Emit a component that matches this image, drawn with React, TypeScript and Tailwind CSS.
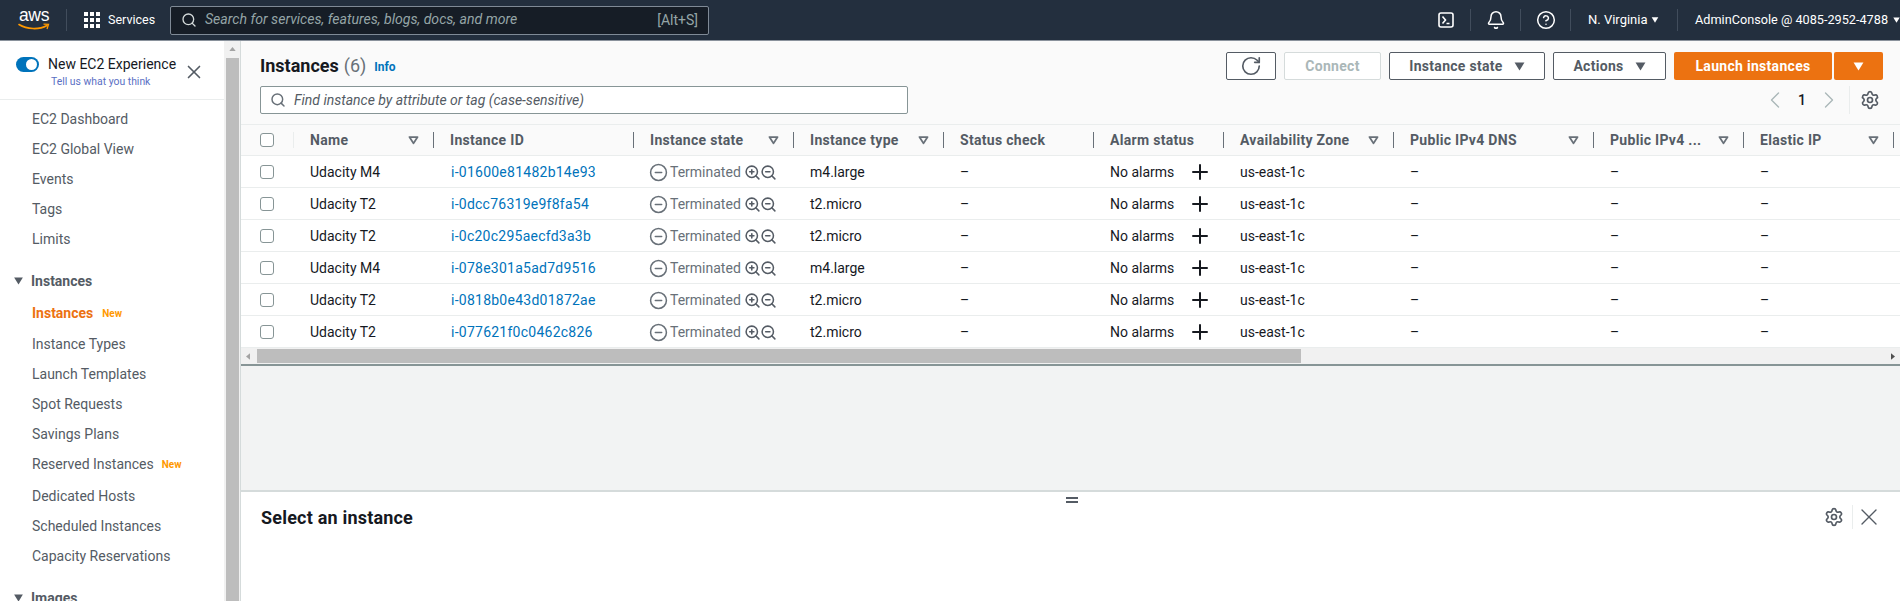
import { Bell, ChevronLeft, ChevronRight, CircleHelp, CircleMinus, Plus, RotateCw, Search, Settings, X, ZoomIn, ZoomOut } from "lucide-react";

const gridCols =
  "grid grid-cols-[53px_140px_200px_160px_150px_150px_130px_170px_200px_150px_150px_minmax(0,1fr)]";

type Row = { name: string; id: string; type: string };

const rows: Row[] = [
  { name: "Udacity M4", id: "i-01600e81482b14e93", type: "m4.large" },
  { name: "Udacity T2", id: "i-0dcc76319e9f8fa54", type: "t2.micro" },
  { name: "Udacity T2", id: "i-0c20c295aecfd3a3b", type: "t2.micro" },
  { name: "Udacity M4", id: "i-078e301a5ad7d9516", type: "m4.large" },
  { name: "Udacity T2", id: "i-0818b0e43d01872ae", type: "t2.micro" },
  { name: "Udacity T2", id: "i-077621f0c0462c826", type: "t2.micro" },
];

const columns = [
  { label: "Name", filter: true },
  { label: "Instance ID", filter: false },
  { label: "Instance state", filter: true },
  { label: "Instance type", filter: true },
  { label: "Status check", filter: false },
  { label: "Alarm status", filter: false },
  { label: "Availability Zone", filter: true },
  { label: "Public IPv4 DNS", filter: true },
  { label: "Public IPv4 ...", filter: true },
  { label: "Elastic IP", filter: true },
];

const navTop = ["EC2 Dashboard", "EC2 Global View", "Events", "Tags", "Limits"];

function Caret({ className }: { className: string }) {
  return (
    <svg viewBox="0 0 12 10" className={className} fill="currentColor">
      <path d="M0.5 0.5h11L6 9.5z" />
    </svg>
  );
}

function FilterIcon() {
  return (
    <svg viewBox="0 0 12 10" className="h-[9px] w-[11px] text-[#687078]" fill="none" stroke="currentColor" strokeWidth="2">
      <path d="M1.5 1.2h9L6 8.2z" strokeLinejoin="round" />
    </svg>
  );
}

function Checkbox() {
  return <span className="block h-[14px] w-[14px] rounded-[3px] border border-[#879596] bg-white" />;
}

function NavItem({ label, isNew }: { label: string; isNew?: boolean }) {
  return (
    <div className="flex h-[30px] items-center pl-[32px] text-[#545b64]">
      <span>{label}</span>
      {isNew ? <span className="ml-[8px] text-[10px] font-bold text-[#ff9900]">New</span> : null}
    </div>
  );
}

function TopDivider() {
  return <span className="block h-[22px] w-px bg-[#414d5c]" />;
}

export default function App() {
  return (
    <div className="flex h-[601px] w-full flex-col overflow-hidden bg-white font-['Roboto','Liberation_Sans',sans-serif] text-[14px] text-[#16191f]">
      <header className="flex h-[41px] shrink-0 items-center border-b border-[#8a929c] bg-[#232f3e] text-white">
        <div className="relative ml-[18px] h-[30px] w-[32px]">
          <span className="block text-center font-['Liberation_Sans',sans-serif] text-[17.5px] leading-[20px] tracking-[-0.3px]">aws</span>
          <svg viewBox="0 0 32 8" className="absolute bottom-[4px] left-0 h-[8px] w-[32px]" fill="none">
            <path d="M1 1.5C9 6.5 21 7 29 2.5" stroke="#ff9900" strokeWidth="1.6" strokeLinecap="round" />
            <path d="M25.5 1.2L30.5 1.4L29 6" stroke="#ff9900" strokeWidth="1.3" />
          </svg>
        </div>
        <span className="ml-[16px] h-[22px] w-px bg-[#414d5c]" />
        <div className="ml-[17px] grid grid-cols-3 gap-[2px]">
          {Array.from({ length: 9 }).map((_, i) => (
            <span key={i} className="h-[4px] w-[4px] bg-white" />
          ))}
        </div>
        <span className="ml-[8px] w-[62px] text-[12.5px]">Services</span>
        <div className="flex h-[29px] w-[539px] items-center rounded-[2px] border border-[#7f8a96] bg-[#161d26] pl-[10px] pr-[10px]">
          <Search className="h-[16px] w-[16px] text-[#d5dbdb]" strokeWidth={2} />
          <span className="ml-[8px] flex-1 text-[14.1px] italic text-[#95a5a6]">
            Search for services, features, blogs, docs, and more
          </span>
          <span className="text-[14px] text-[#95a5a6]">[Alt+S]</span>
        </div>
        <div className="ml-auto flex items-center text-[13px]">
          <svg viewBox="0 0 16 16" className="h-[16px] w-[16px]" fill="none" stroke="white" strokeWidth="1.6">
            <rect x="1" y="1" width="14" height="14" rx="2" />
            <path d="M4.5 4.5L7.5 8L4.5 11.5M8.5 11.5H11.5" />
          </svg>
          <span className="ml-[16px]"><TopDivider /></span>
          <Bell className="ml-[15px] h-[20px] w-[20px]" strokeWidth={1.8} />
          <span className="ml-[14px]"><TopDivider /></span>
          <CircleHelp className="ml-[15px] h-[20px] w-[20px]" strokeWidth={1.8} />
          <span className="ml-[14px]"><TopDivider /></span>
          <span className="ml-[17px] w-[58px] whitespace-nowrap">N. Virginia</span>
          <Caret className="ml-[5px] h-[6px] w-[8px]" />
          <span className="ml-[18px]"><TopDivider /></span>
          <span className="ml-[17px] w-[192px] whitespace-nowrap text-[12.7px]">AdminConsole @ 4085-2952-4788</span>
          <Caret className="ml-[6px] h-[6px] w-[7px] shrink-0" />
        </div>
      </header>

      <div className="flex min-h-0 flex-1">
        <aside className="w-[224px] shrink-0 overflow-hidden bg-white">
          <div className="relative h-[59px] border-b border-[#eaeded]">
            <div className="absolute left-[16px] top-[16px] flex h-[15px] w-[23px] items-center justify-end rounded-full bg-[#0073bb] pr-[2px]">
              <span className="h-[11px] w-[11px] rounded-full bg-white" />
            </div>
            <span className="absolute left-[48px] top-[14px] text-[14px] leading-[18px] text-[#16191f]">New EC2 Experience</span>
            <span className="absolute left-[51px] top-[34px] text-[10.4px] leading-[14px] text-[#5a6fc4]">Tell us what you think</span>
            <X className="absolute left-[183px] top-[20px] h-[22px] w-[22px] text-[#545b64]" strokeWidth={1.8} />
          </div>
          <nav className="pt-[4px]">
            {navTop.map((item) => (
              <NavItem key={item} label={item} />
            ))}
            <div className="mt-[12px] flex h-[30px] items-center pl-[13px] font-bold text-[#545b64]">
              <Caret className="h-[8px] w-[11px] text-[#545b64]" />
              <span className="ml-[7px]">Instances</span>
            </div>
            <div className="flex h-[33px] items-center pl-[32px] pt-[1px] font-bold text-[#ec7211]">
              <span>Instances</span>
              <span className="ml-[9px] text-[10px] font-bold text-[#ff9900]">New</span>
            </div>
            <NavItem label="Instance Types" />
            <NavItem label="Launch Templates" />
            <NavItem label="Spot Requests" />
            <NavItem label="Savings Plans" />
            <NavItem label="Reserved Instances" isNew />
            <div className="h-[2px]" />
            <NavItem label="Dedicated Hosts" />
            <NavItem label="Scheduled Instances" />
            <NavItem label="Capacity Reservations" />
            <div className="mt-[12px] flex h-[30px] items-center pl-[13px] font-bold text-[#545b64]">
              <Caret className="h-[8px] w-[11px] text-[#545b64]" />
              <span className="ml-[7px]">Images</span>
            </div>
          </nav>
        </aside>

        <div className="flex w-[16px] shrink-0 flex-col items-center bg-[#f1f1f1]">
          <svg viewBox="0 0 8 5" className="mt-[6px] h-[4px] w-[7px] text-[#a3a3a3]" fill="currentColor">
            <path d="M0 5L4 0L8 5z" />
          </svg>
          <div className="mt-[7px] w-[13px] flex-1 bg-[#bdbdbd]" />
        </div>

        <main className="flex min-w-0 flex-1 flex-col border-l border-[#d5dbdb]">
          <section className="h-[84px] shrink-0 border-b border-[#eaeded] bg-[#fafafa] pl-[19px] pr-[17px]">
            <div className="flex h-[45px] items-center pt-[5px]">
              <h1 className="text-[18px] font-bold leading-[24px]">Instances</h1>
              <span className="ml-[5px] text-[18px] leading-[24px] text-[#687078]">(6)</span>
              <span className="ml-[8px] mt-[1px] text-[12px] font-bold text-[#0073bb]">Info</span>
              <div className="ml-auto flex items-center gap-[8px] text-[14px] font-bold tracking-[0.3px]">
                <button type="button" className="flex h-[28px] w-[50px] items-center justify-center rounded-[2px] border border-[#545b64] bg-white text-[#545b64]">
                  <RotateCw className="h-[22px] w-[22px]" strokeWidth={1.8} />
                </button>
                <button type="button" className="h-[28px] w-[97px] rounded-[2px] border border-[#d5dbdb] bg-white font-bold text-[#aab7b8]">
                  Connect
                </button>
                <button type="button" className="flex h-[28px] w-[156px] items-center justify-center gap-[11px] rounded-[2px] border border-[#545b64] bg-white text-[#545b64]">
                  Instance state
                  <Caret className="h-[9px] w-[11px]" />
                </button>
                <button type="button" className="flex h-[28px] w-[113px] items-center justify-center gap-[11px] rounded-[2px] border border-[#545b64] bg-white text-[#545b64]">
                  Actions
                  <Caret className="h-[9px] w-[11px]" />
                </button>
                <div className="flex gap-[2px]">
                  <button type="button" className="h-[28px] w-[158px] rounded-[2px] bg-[#ec7211] text-white">Launch instances</button>
                  <button type="button" className="flex h-[28px] w-[49px] items-center justify-center rounded-[2px] bg-[#ec7211] text-white">
                    <Caret className="h-[9px] w-[11px]" />
                  </button>
                </div>
              </div>
            </div>
            <div className="flex items-start">
              <div className="flex h-[28px] w-[648px] items-center rounded-[2px] border border-[#879596] bg-white pl-[9px]">
                <Search className="h-[16px] w-[16px] text-[#687078]" strokeWidth={2.2} />
                <span className="ml-[8px] text-[14px] italic text-[#545b64]">Find instance by attribute or tag (case-sensitive)</span>
              </div>
              <div className="ml-auto flex h-[28px] items-center pr-[3px]">
                <ChevronLeft className="h-[28px] w-[28px] text-[#aab7b8]" strokeWidth={1.2} />
                <span className="ml-[8px] w-[10px] text-center font-medium">1</span>
                <ChevronRight className="ml-[8px] h-[28px] w-[28px] text-[#aab7b8]" strokeWidth={1.2} />
                <span className="ml-[6px] h-[28px] w-px bg-[#eaeded]" />
                <Settings className="ml-[10px] h-[20px] w-[20px] text-[#545b64]" strokeWidth={2} />
              </div>
            </div>
          </section>

          <div className={`${gridCols} h-[31px] shrink-0 items-center border-b border-[#eaeded] bg-[#fafafa] font-bold tracking-[0.3px] text-[#545b64]`}>
            <div className="flex h-[18px] items-center justify-between pl-[19px]">
              <Checkbox />
              <span className="h-[16px] w-px bg-[#eaeded]" />
            </div>
            {columns.map((col) => (
              <div key={col.label} className="flex h-[18px] items-center justify-between pl-[16px]">
                <span className="whitespace-nowrap">{col.label}</span>
                <span className="flex items-center gap-[14px]">
                  {col.filter ? <FilterIcon /> : null}
                  <span className="h-[16px] w-px bg-[#687078]" />
                </span>
              </div>
            ))}
          </div>

          {rows.map((row) => (
            <div key={row.id} className={`${gridCols} h-[32px] shrink-0 items-center border-b border-[#eaeded] bg-white pt-px`}>
              <div className="pl-[19px]"><Checkbox /></div>
              <div className="pl-[16px]">{row.name}</div>
              <div className="pl-[17px] tracking-[0.25px] text-[#0073bb]">{row.id}</div>
              <div className="flex items-center pl-[15px] text-[#687078]">
                <CircleMinus className="h-[19px] w-[19px]" strokeWidth={1.9} />
                <span className="ml-[2px]">Terminated</span>
                <ZoomIn className="ml-[3px] h-[17px] w-[17px] text-[#545b64]" strokeWidth={2.2} />
                <ZoomOut className="ml-[-1px] h-[17px] w-[17px] text-[#545b64]" strokeWidth={2.2} />
              </div>
              <div className="pl-[16px]">{row.type}</div>
              <div className="pl-[16px]">–</div>
              <div className="flex items-center pl-[16px]">
                <span>No alarms</span>
                <Plus className="ml-[14px] h-[24px] w-[24px]" strokeWidth={2} />
              </div>
              <div className="pl-[16px]">us-east-1c</div>
              <div className="pl-[16px]">–</div>
              <div className="pl-[16px]">–</div>
              <div className="pl-[16px]">–</div>
              <div />
            </div>
          ))}

          <div className="flex h-[18px] shrink-0 items-center border-b-2 border-[#879596] bg-[#f1f1f1]">
            <svg viewBox="0 0 5 8" className="ml-[5px] h-[7px] w-[4px] text-[#a3a3a3]" fill="currentColor">
              <path d="M5 0L0 4L5 8z" />
            </svg>
            <div className="ml-[7px] h-[14px] w-[1044px] bg-[#bdbdbd]" />
            <svg viewBox="0 0 5 8" className="ml-auto mr-[5px] h-[7px] w-[4px] text-[#505050]" fill="currentColor">
              <path d="M0 0L5 4L0 8z" />
            </svg>
          </div>

          <div className="h-[124px] shrink-0 bg-[#f2f3f3]" />

          <section className="relative flex-1 border-t-2 border-[#d5dbdb] bg-white pl-[20px] pr-[17px]">
            <div className="absolute left-[825px] top-[5px] flex flex-col gap-[2px]">
              <span className="h-[2px] w-[12px] bg-[#545b64]" />
              <span className="h-[2px] w-[12px] bg-[#545b64]" />
            </div>
            <div className="flex h-[50px] items-center">
              <h2 className="text-[18px] font-bold tracking-[0.2px]">Select an instance</h2>
              <Settings className="ml-auto h-[20px] w-[20px] text-[#545b64]" strokeWidth={2} />
              <span className="ml-[8px] h-[24px] w-px bg-[#eaeded]" />
              <X className="ml-[2px] h-[28px] w-[28px] text-[#545b64]" strokeWidth={1.2} />
            </div>
          </section>
        </main>
      </div>
    </div>
  );
}
